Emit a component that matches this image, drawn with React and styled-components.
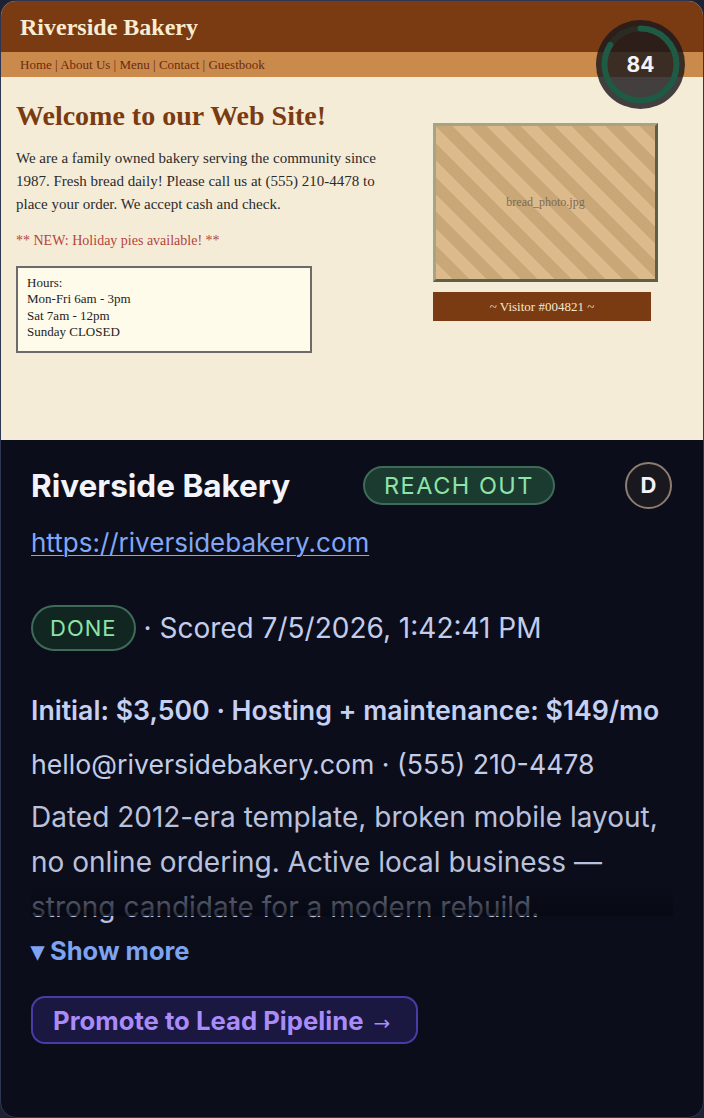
import React from 'react'
import styled, { createGlobalStyle } from 'styled-components'

const Global = createGlobalStyle`
  html, body { margin: 0; padding: 0; background: #1d2134; }
  * { box-sizing: border-box; }
`

const Card = styled.div`
  width: 704px;
  height: 1118px;
  border: 1px solid #2f3651;
  border-radius: 16px;
  overflow: hidden;
  background: #0b0d1a;
  display: flex;
  flex-direction: column;
`

const Preview = styled.div`
  position: relative;
  height: 439px;
  background: #f5ecd8;
  font-family: "Liberation Serif", "Times New Roman", serif;
  flex-shrink: 0;
`

const SiteHeader = styled.div`
  height: 51px;
  background: #7a3b12;
  color: #f8ecd2;
  font-size: 24px;
  font-weight: bold;
  padding: 13px 0 0 19px;
`

const SiteNav = styled.div`
  height: 25px;
  background: #c98a4b;
  color: #6b2a10;
  font-size: 13px;
  padding: 5px 0 0 19px;
`

const SiteBody = styled.div`
  display: flex;
  padding: 0 0 0 15px;
`

const SiteMain = styled.div`
  width: 378px;
`

const SiteTitle = styled.h1`
  margin: 23px 0 15px;
  font-size: 28px;
  line-height: 32px;
  color: #7a3b12;
  font-weight: bold;
`

const SiteText = styled.p`
  margin: 0;
  font-size: 15px;
  line-height: 23px;
  color: #2b2b2b;
`

const SiteNews = styled.p`
  margin: 17px 0 17px;
  font-size: 14px;
  line-height: 16px;
  color: #b4443a;
`

const HoursBox = styled.div`
  width: 296px;
  border: 2px solid #6b6b6b;
  background: #fffbea;
  padding: 7px 9px 10px;
  font-size: 13px;
  line-height: 16.4px;
  color: #222;
`

const SiteSide = styled.div`
  margin: 46px 0 0 39px;
  width: 225px;
`

const Photo = styled.div`
  width: 225px;
  height: 159px;
  border: 3px solid;
  border-color: #a3a584 #5e5e4a #5e5e4a #a3a584;
  background: repeating-linear-gradient(45deg, #dcba8b 0 12px, #caa777 12px 24px);
  display: flex;
  align-items: center;
  justify-content: center;
  font-size: 12px;
  color: #7a6a55;
`

const Visitor = styled.div`
  margin-top: 10px;
  width: 218px;
  height: 29px;
  background: #7a3b12;
  color: #f5e6cc;
  font-size: 13px;
  display: flex;
  align-items: center;
  justify-content: center;
`

const ScoreBadge = styled.div`
  position: absolute;
  top: 19px;
  left: 595px;
  width: 89px;
  height: 89px;
  border-radius: 50%;
  background: rgba(28, 24, 28, 0.82);
  display: flex;
  align-items: center;
  justify-content: center;
  svg { position: absolute; inset: 0; }
`

const ScoreNum = styled.span`
  position: relative;
  font-family: Inter, "Liberation Sans", sans-serif;
  font-weight: 700;
  font-size: 21px;
  color: #f4f4f8;
`

const Info = styled.div`
  padding: 25px 30px 0 30px;
  font-family: Inter, "Liberation Sans", sans-serif;
  display: flex;
  flex-direction: column;
`

const TitleRow = styled.div`
  display: flex;
  align-items: center;
  height: 40px;
`

const Name = styled.div`
  font-size: 31.5px;
  font-weight: 700;
  color: #f3f4fa;
  width: 332px;
`

const Pill = styled.span`
  display: inline-flex;
  align-items: center;
  justify-content: center;
  height: ${p => p.$h}px;
  padding: 0 ${p => p.$px}px;
  border-radius: 999px;
  border: 2px solid #3e6a58;
  background: ${p => p.$bg};
  color: #8de3a8;
  font-size: ${p => p.$fs}px;
  letter-spacing: ${p => p.$ls}px;
`

const Avatar = styled.div`
  margin-left: auto;
  margin-right: 1px;
  width: 47px;
  height: 47px;
  border-radius: 50%;
  border: 2px solid #8f7c70;
  background: #19181f;
  color: #f2f2f8;
  font-weight: 700;
  font-size: 22px;
  display: flex;
  align-items: center;
  justify-content: center;
`

const Link = styled.a`
  margin-top: 21px;
  align-self: flex-start;
  font-size: 26px;
  line-height: 34px;
  color: #82a7f5;
  text-decoration: underline;
  text-underline-offset: 3px;
  text-decoration-thickness: 1px;
`

const StatusRow = styled.div`
  margin-top: 45px;
  display: flex;
  align-items: center;
  gap: 8px;
  font-size: 28px;
  color: #c3ccea;
`

const Price = styled.div`
  margin-top: 42px;
  font-size: 26.7px;
  line-height: 34px;
  font-weight: 600;
  color: #c6d0f2;
`

const Contact = styled.div`
  margin-top: 20px;
  font-size: 26.7px;
  line-height: 34px;
  color: #c3cbe6;
`

const Desc = styled.div`
  position: relative;
  margin-top: 14px;
  font-size: 28px;
  line-height: 45px;
  color: #b9c1dc;
  max-height: 135px;
  overflow: hidden;
  &::after {
    content: '';
    position: absolute;
    left: 0;
    right: 0;
    bottom: 14px;
    height: 32px;
    background: linear-gradient(rgba(11, 13, 26, 0.35), rgba(6, 8, 18, 0.8));
  }
`

const ShowMore = styled.div`
  margin-top: 5px;
  font-size: 25.5px;
  line-height: 32px;
  font-weight: 700;
  color: #7ea3f0;
`

const Promote = styled.button`
  margin-top: 29px;
  align-self: flex-start;
  height: 48px;
  padding: 0 26px 0 20px;
  border-radius: 14px;
  border: 2px solid #4a3ca6;
  background: #1a1740;
  color: #a98cf8;
  font-family: Inter, "Liberation Sans", sans-serif;
  font-size: 25.7px;
  font-weight: 700;
  span {
    font-family: "DejaVu Sans", sans-serif;
    font-size: 20px;
    font-weight: 400;
    margin-left: 10px;
  }
`

const ScoreRing = ({ value }) => {
  const r = 36
  const c = 2 * Math.PI * r
  return (
    <svg width="89" height="89" viewBox="0 0 89 89">
      <circle cx="44.5" cy="44.5" r={r} fill="none" stroke="rgba(40,70,58,0.35)" strokeWidth="6" />
      <circle
        cx="44.5" cy="44.5" r={r} fill="none" stroke="#1f5a45" strokeWidth="6" strokeLinecap="round"
        strokeDasharray={`${(c * value) / 100} ${c}`}
        transform="rotate(-90 44.5 44.5)"
      />
    </svg>
  )
}

export default function App() {
  return (
    <>
      <Global />
      <Card>
        <Preview>
          <SiteHeader>Riverside Bakery</SiteHeader>
          <SiteNav>Home | About Us | Menu | Contact | Guestbook</SiteNav>
          <SiteBody>
            <SiteMain>
              <SiteTitle>Welcome to our Web Site!</SiteTitle>
              <SiteText>
                We are a family owned bakery serving the community since 1987. Fresh bread daily! Please call us at (555) 210-4478 to place your order. We accept cash and check.
              </SiteText>
              <SiteNews>** NEW: Holiday pies available! **</SiteNews>
              <HoursBox>
                Hours:<br />
                Mon-Fri 6am - 3pm<br />
                Sat 7am - 12pm<br />
                Sunday CLOSED
              </HoursBox>
            </SiteMain>
            <SiteSide>
              <Photo>bread_photo.jpg</Photo>
              <Visitor>~ Visitor #004821 ~</Visitor>
            </SiteSide>
          </SiteBody>
          <ScoreBadge>
            <ScoreRing value={84} />
            <ScoreNum>84</ScoreNum>
          </ScoreBadge>
        </Preview>
        <Info>
          <TitleRow>
            <Name>Riverside Bakery</Name>
            <Pill $h={39} $px={19} $bg="#1b3a30" $fs={23.5} $ls={1.5}>REACH OUT</Pill>
            <Avatar>D</Avatar>
          </TitleRow>
          <Link href="#">https://riversidebakery.com</Link>
          <StatusRow>
            <Pill $h={46} $px={17} $bg="#112620" $fs={22} $ls={1}>DONE</Pill>
            <span>· Scored 7/5/2026, 1:42:41 PM</span>
          </StatusRow>
          <Price>Initial: $3,500 · Hosting + maintenance: $149/mo</Price>
          <Contact>hello@riversidebakery.com · (555) 210-4478</Contact>
          <Desc>
            Dated 2012-era template, broken mobile layout, no online ordering. Active local business — strong candidate for a modern rebuild.
          </Desc>
          <ShowMore>▾ Show more</ShowMore>
          <Promote>Promote to Lead Pipeline<span>→</span></Promote>
        </Info>
      </Card>
    </>
  )
}
